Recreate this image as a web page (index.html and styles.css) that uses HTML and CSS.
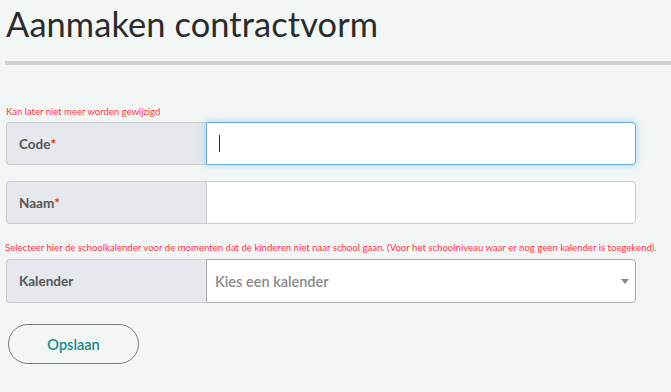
FILE: index.html
```html
<!DOCTYPE html>
<html lang="nl">
<head>
<meta charset="utf-8">
<title>Aanmaken contractvorm</title>
<link rel="stylesheet" href="styles.css">
</head>
<body>
<div class="page">
  <h1 class="title">Aanmaken contractvorm</h1>
  <div class="rule"></div>
  <form class="form">
    <p class="hint hint-first">Kan later niet meer worden gewijzigd</p>
    <div class="group">
      <span class="addon">Code<span class="req">*</span></span>
      <div class="control focused"><span class="caret"></span></div>
    </div>
    <div class="group group-gap">
      <span class="addon">Naam<span class="req">*</span></span>
      <div class="control"></div>
    </div>
    <p class="hint hint-second">Selecteer hier de schoolkalender voor de momenten dat de kinderen niet naar school gaan. (Voor het schoolniveau waar er nog geen kalender is toegekend).</p>
    <div class="group group-tall">
      <span class="addon">Kalender</span>
      <div class="control select"><span class="placeholder">Kies een kalender</span><span class="arrow"></span></div>
    </div>
    <div class="actions">
      <button type="button" class="btn">Opslaan</button>
    </div>
  </form>
</div>
</body>
</html>
```

FILE: styles.css
```css
html, body {
  margin: 0;
  padding: 0;
  background: #f2f7f5;
  font-family: "Lato", "Open Sans", sans-serif;
}
.page {
  padding: 0 0 0 6px;
}
.title {
  margin: 0;
  padding-top: 4px;
  font-size: 34.4px;
  line-height: 40px;
  font-weight: 400;
  color: #2b2b2b;
  letter-spacing: 0.1px;
}
.rule {
  margin-top: 17px;
  height: 4px;
  background: #ccd0d8;
  margin-left: -1px;
}
.form {
  width: 630px;
}
.hint {
  margin: 0;
  color: #ff3447;
  font-size: 9.5px;
  line-height: 12px;
}
.hint-first {
  margin-top: 41px;
  margin-bottom: 4px;
}
.hint-second {
  margin-top: 18px;
  margin-bottom: 5px;
  white-space: nowrap;
  margin-left: -1px;
  font-size: 9.6px;
}
.group {
  display: flex;
  height: 43px;
}
.group-tall {
  height: 44px;
}
.group-gap {
  margin-top: 16px;
}
.addon {
  box-sizing: border-box;
  width: 200px;
  background: #e5e8ec;
  border: 1px solid #cccccc;
  border-right: none;
  border-radius: 4px 0 0 4px;
  display: flex;
  align-items: center;
  padding-left: 12px;
  font-size: 13.5px;
  font-weight: 700;
  color: #555555;
}
.req {
  color: #ff1a1a;
}
.control {
  box-sizing: border-box;
  flex: 1;
  background: #ffffff;
  border: 1px solid #cccccc;
  border-radius: 0 4px 4px 0;
  display: flex;
  align-items: center;
  position: relative;
}
.control.focused {
  border-color: #66afe9;
  box-shadow: 0 0 7px rgba(102, 175, 233, 0.55);
}
.caret {
  display: block;
  width: 1px;
  height: 17px;
  margin-left: 12px;
  background: #333333;
}
.select {
  border-color: #aaaaaa;
}
.placeholder {
  padding-left: 8px;
  font-size: 14.5px;
  color: #8a8a8a;
  font-weight: 600;
}
.arrow {
  position: absolute;
  right: 6px;
  top: 19px;
  width: 0;
  height: 0;
  border-left: 4px solid transparent;
  border-right: 4px solid transparent;
  border-top: 5px solid #888888;
}
.actions {
  margin-top: 21px;
  padding-left: 2px;
}
.btn {
  width: 131px;
  height: 40px;
  border: 1px solid #7a7a7a;
  border-radius: 20px;
  background: transparent;
  font-family: "Lato", "Open Sans", sans-serif;
  font-size: 14.5px;
  font-weight: 600;
  color: #16888e;
  cursor: pointer;
}
```
